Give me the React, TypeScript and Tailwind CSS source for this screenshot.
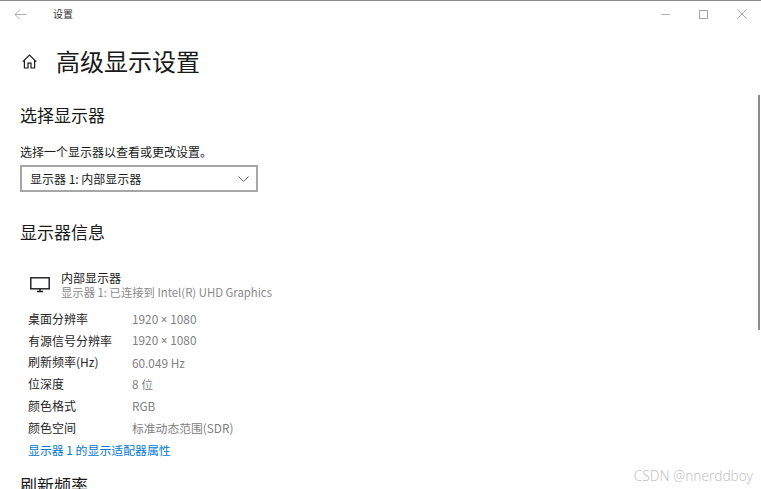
import React from "react";

const font = { fontFamily: '"Noto Sans CJK SC", "Noto Sans", sans-serif' };
const latin = { fontFamily: '"Noto Sans", sans-serif' };

const Times = () => <span style={latin}>×</span>;

const rows: [string, React.ReactNode][] = [
  ["桌面分辨率", <>1920 <Times /> 1080</>],
  ["有源信号分辨率", <>1920 <Times /> 1080</>],
  ["刷新频率(Hz)", "60.049 Hz"],
  ["位深度", "8 位"],
  ["颜色格式", "RGB"],
  ["颜色空间", "标准动态范围(SDR)"],
];

export default function App() {
  return (
    <div className="relative w-[761px] h-[489px] overflow-hidden bg-white text-[#1a1a1a]" style={font}>
      <div className="h-px bg-[#8a8a8a]" />
      <header className="h-[26px] flex items-center">
        <svg className="ml-[14px] w-[13px] h-[13px]" viewBox="0 0 13 13" fill="none" stroke="#b0b0b0" strokeWidth="1">
          <path d="M1 6.5h11.5M6 1.5l-5 5 5 5" />
        </svg>
        <span className="ml-[26px] pb-[2px] text-[10px] text-[#333]">设置</span>
        <div className="ml-auto flex items-center">
          <svg className="w-[9px] h-[9px] mr-[29px]" viewBox="0 0 9 9" stroke="#b5b5b5" fill="none">
            <path d="M0 4.5h9" />
          </svg>
          <svg className="w-[9px] h-[9px] mr-[29px]" viewBox="0 0 9 9" stroke="#a5a5a5" fill="none">
            <rect x="0.5" y="0.5" width="8" height="8" />
          </svg>
          <svg className="w-[10px] h-[10px] mr-[14px]" viewBox="0 0 10 10" stroke="#a5a5a5" fill="none">
            <path d="M0.5 0.5l9 9M9.5 0.5l-9 9" />
          </svg>
        </div>
      </header>

      <main className="pl-[20px]">
        <div className="flex items-center mt-[18px] h-[32px]">
          <svg className="ml-[2px] w-[15px] h-[15px]" viewBox="0 0 15 15" fill="none" stroke="#1a1a1a" strokeWidth="1.2">
            <path d="M0.8 7.6L7.5 1l6.7 6.6M2.4 6.2v7.8h3.6V9.2h3v4.8h3.6V6.2" />
          </svg>
          <h1 className="ml-[19px] text-[24px] leading-[32px] font-normal">高级显示设置</h1>
        </div>

        <h2 className="mt-[26px] text-[17px] leading-[24px] font-normal">选择显示器</h2>
        <p className="mt-[17px] text-[12px] leading-[16px]">选择一个显示器以查看或更改设置。</p>
        <div className="mt-[5px] w-[238px] h-[27px] border-2 border-[#a6a6a6] flex items-center pl-[8px] pr-[7px] text-[12px]">
          <span>显示器 1: 内部显示器</span>
          <svg className="ml-auto w-[11px] h-[6px]" viewBox="0 0 11 6" fill="none" stroke="#555" strokeWidth="0.9">
            <path d="M0.5 0.5l5 5 5-5" />
          </svg>
        </div>

        <h2 className="mt-[28px] text-[17px] leading-[24px] font-normal">显示器信息</h2>

        <div className="flex mt-[26px] ml-[10px] items-center">
          <svg className="w-[20px] h-[16px]" viewBox="0 0 20 16" fill="none" stroke="#1a1a1a" strokeWidth="1.4">
            <rect x="0.8" y="0.8" width="18.4" height="11" />
            <path d="M7 14.5h6M10 12v2" />
          </svg>
          <div className="ml-[11px]">
            <div className="text-[12px] leading-[15px]">内部显示器</div>
            <div className="text-[11.35px] leading-[15px] text-[#8a8a8a]">显示器 1: 已连接到 Intel(R) UHD Graphics</div>
          </div>
        </div>

        <dl className="mt-[8px] ml-[8px]">
          {rows.map(([k, v]) => (
            <div key={k} className="flex h-[21.8px] items-center text-[12px]">
              <dt className="w-[104px] text-[#262626]">{k}</dt>
              <dd className="text-[11.8px] text-[#808080]">{v}</dd>
            </div>
          ))}
          <div className="h-[21.8px] flex items-center text-[11.9px] text-[#0078d4]">显示器 1 的显示适配器属性</div>
        </dl>
        <h2 className="mt-[12px] text-[17px] leading-[24px] font-normal">刷新频率</h2>
      </main>

      <div className="absolute right-[1px] top-[95px] w-[2px] h-[235px] bg-[#8c8c8c]" />
      <div className="absolute right-[8px] top-[467px] text-[13.7px] leading-[18px] font-light text-[#c4c4c4]" style={latin}>CSDN @nnerddboy</div>
    </div>
  );
}
